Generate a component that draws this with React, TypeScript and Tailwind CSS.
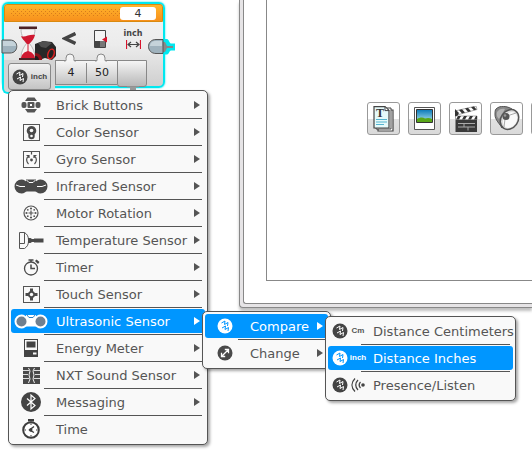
import clsx from "clsx"
import type { ReactNode } from "react"

type MenuEntry = {
  label: string
  icon: ReactNode
  active?: boolean
  leaf?: boolean
  submenu?: ReactNode
}

function CompareIcon({ inverted = false }: { inverted?: boolean }) {
  return (
    <svg width="16" height="16" viewBox="0 0 16 16" className="shrink-0" aria-hidden>
      <circle cx="8" cy="8" r="7.5" fill={inverted ? "#fff" : "#444"} />
      <g fill="none" stroke={inverted ? "#0096ff" : "#fff"}>
        <path d="M4.500 5 8 3l-.5 3.500L11 4.500 10.500 8" />
        <path d="M5 10l3.500-2-.5 3.500 3.500-2L11 13" />
      </g>
    </svg>
  )
}

function ChangeIcon() {
  return (
    <svg width="16" height="16" viewBox="0 0 16 16" aria-hidden>
      <circle cx="8" cy="8" r="7.5" fill="#4a4a4a" />
      <path d="M5 11 11 5M7.8 4.5h3.7v3.7M4.5 7.8v3.7h3.7" fill="none" stroke="#fff" strokeWidth="1.3" />
    </svg>
  )
}

function BrickIcon() {
  return (
    <svg width="20" height="16" viewBox="0 0 20 16" aria-hidden>
      <path d="M6.500 0.500h7l2.500 3.500h-12zM6.500 15.500h7l2.500-3.500h-12z" fill="#555" />
      <rect x="0.500" y="5" width="5" height="6" rx="2" fill="#555" />
      <rect x="14.500" y="5" width="5" height="6" rx="2" fill="#555" />
      <rect x="6.500" y="5" width="7" height="6" rx="1" fill="#555" />
      <rect x="9" y="7" width="2" height="2" fill="#fff" />
    </svg>
  )
}

function ColorIcon() {
  return (
    <svg width="17" height="17" viewBox="0 0 17 17" aria-hidden>
      <rect x="0.5" y="0.5" width="16" height="16" fill="none" stroke="#555" />
      <path d="M8.500 2a4.800 4.800 0 0 1 3.200 8.300V12a3.200 3.200 0 0 1-6.400 0v-1.700A4.800 4.800 0 0 1 8.500 2z" fill="#4a4a4a" />
      <circle cx="8.5" cy="6.500" r="1.800" fill="#f9f9f9" />
      <circle cx="8.5" cy="12" r="1.300" fill="#f9f9f9" />
    </svg>
  )
}

function GyroIcon() {
  return (
    <svg width="17" height="17" viewBox="0 0 17 17" aria-hidden>
      <rect x="0.5" y="0.5" width="16" height="16" fill="none" stroke="#555" />
      <path d="M5.500 13C3 10.500 3 7 5.500 5M3.500 4.500h2.500v2.500M11.500 13c2.500-2.500 2.500-6 0-8M13.500 4.500H11v2.500M8.500 1v2.500" fill="none" stroke="#4a4a4a" strokeWidth="1.200" />
      <circle cx="8.5" cy="9" r="1.400" fill="#4a4a4a" />
    </svg>
  )
}

function InfraredIcon() {
  return (
    <svg width="34" height="15" viewBox="0 0 34 15" aria-hidden>
      <path d="M7.500 0.500c3 0 4 2 5.500 2h8c1.500 0 2.500-2 5.500-2a7 7 0 0 1 0 14c-3 0-4-2-5.500-2h-8c-1.500 0-2.500 2-5.500 2a7 7 0 0 1 0-14z" fill="#4a4a4a" />
      <path d="M12 0.500h10v3H12z" fill="#4a4a4a" />
      <path d="m12.500 1 2.500 2.500h4L21.500 1M2 6l4 1.500h5M32 6l-4 1.500h-5" fill="none" stroke="#fff" />
    </svg>
  )
}

function MotorIcon() {
  return (
    <svg width="16" height="16" viewBox="0 0 16 16" aria-hidden>
      <circle cx="8" cy="8" r="7" fill="none" stroke="#555" strokeWidth="1.200" />
      <path d="M8 5.500v5M5.500 8h5" stroke="#555" strokeWidth="1.200" />
      <g fill="#555">
        <circle cx="8" cy="3.500" r="1.100" />
        <circle cx="8" cy="12.500" r="1.100" />
        <circle cx="3.500" cy="8" r="1.100" />
        <circle cx="12.500" cy="8" r="1.100" />
        <circle cx="4.800" cy="4.800" r="0.900" />
        <circle cx="11.200" cy="4.800" r="0.900" />
        <circle cx="4.800" cy="11.200" r="0.900" />
        <circle cx="11.200" cy="11.200" r="0.900" />
      </g>
    </svg>
  )
}

function TemperatureIcon() {
  return (
    <svg width="25" height="17" viewBox="0 0 25 17" aria-hidden>
      <path d="M0.500 0.500h5c3 2 4 4 4 8s-1 6-4 8h-5zM0.500 11.500h5v-11" fill="none" stroke="#555" />
      <path d="M9 6h2.500l1.500 1h2v3h-2l-1.500 1H9zM15 6.500h9.500v4H15z" fill="#4a4a4a" />
    </svg>
  )
}

function TimerIcon() {
  return (
    <svg width="17" height="17" viewBox="0 0 17 17" aria-hidden>
      <circle cx="8" cy="9.500" r="6.500" fill="none" stroke="#4a4a4a" strokeWidth="1.300" />
      <path d="M8 5.500v4h4M5.500 1h5M8 1v2" fill="none" stroke="#4a4a4a" strokeWidth="1.500" />
      <path d="m12 2 1.500-1.500L16.500 3 15 5z" fill="#4a4a4a" />
    </svg>
  )
}

function TouchIcon() {
  return (
    <svg width="17" height="17" viewBox="0 0 17 17" aria-hidden>
      <rect x="0.5" y="0.5" width="16" height="16" fill="none" stroke="#555" />
      <path d="M7 2.500h3v2.500l2 2h2.500v3H12l-2 2v2.500H7V12l-2-2H2.500V7H5l2-2z" fill="#4a4a4a" />
      <circle cx="8.5" cy="8.5" r="1.700" fill="#f9f9f9" />
    </svg>
  )
}

function UltrasonicIcon() {
  return (
    <svg width="34" height="15" viewBox="0 0 34 15" aria-hidden>
      <path d="M7.500 0.500c3 0 4 2 5.500 2h8c1.500 0 2.500-2 5.500-2a7 7 0 0 1 0 14c-3 0-4-2-5.500-2h-8c-1.500 0-2.500 2-5.500 2a7 7 0 0 1 0-14z" fill="#fff" />
      <path d="M12 1h10v3H12z" fill="#fff" />
      <circle cx="7.500" cy="7.500" r="5" fill="#708090" />
      <circle cx="26.500" cy="7.500" r="5" fill="#708090" />
      <path d="m12.500 0.500 2.500 3h4l2.500-3" fill="none" stroke="#2a7fc0" />
    </svg>
  )
}

function EnergyIcon() {
  return (
    <svg width="14" height="18" viewBox="0 0 14 18" aria-hidden>
      <path d="M0 0h14v18H0z" fill="#444" />
      <path d="M1 1h12v10H1z" fill="#f9f9f9" />
      <path d="M2.500 2.500h9v6h-9z" fill="#444" />
      <path d="M9 13.500h3.500v2H9z" fill="#f9f9f9" />
    </svg>
  )
}

function SoundIcon() {
  return (
    <svg width="17" height="17" viewBox="0 0 17 17" aria-hidden>
      <path d="M0 0h17v17H0z" fill="#4a4a4a" />
      <path d="M0 3.500h6M0 7.500h5M0 11.500h6M11 3.500h6M12 7.500h5M11 11.500h6" stroke="#ddd" />
      <path d="M5.500 1 7 4 6 8l1 4-1.500 4M11.500 1 10 4l1 4-1 4 1.500 4" fill="none" stroke="#eee" />
    </svg>
  )
}

function MessagingIcon() {
  return (
    <svg width="20" height="20" viewBox="0 0 20 20" aria-hidden>
      <circle cx="10" cy="10" r="10" fill="#444" />
      <path d="m6 6.500 8 7-4 3.500V3l4 3.500-8 7" fill="none" stroke="#fff" strokeWidth="1.200" />
    </svg>
  )
}

function TimeIcon() {
  return (
    <svg width="18" height="20" viewBox="0 0 18 20" aria-hidden>
      <path d="M6 0h6v2.500H6z" fill="#3c3c3c" />
      <circle cx="9" cy="11" r="7.800" fill="#fff" stroke="#3c3c3c" strokeWidth="2" />
      <path d="M12 7.500 7.500 11l4.500 2.500" fill="none" stroke="#3c3c3c" strokeWidth="1.400" />
      <circle cx="8.800" cy="11" r="1.700" fill="#3c3c3c" />
      <path d="M9 4.500v1.500M9 16v1.500M2.500 11H4M14 11h1.500" stroke="#3c3c3c" />
    </svg>
  )
}

function ListenIcon() {
  return (
    <svg width="14" height="16" viewBox="0 0 14 16" aria-hidden>
      <path d="M4 1.500c-4 4-4 9 0 13M7 3c-3 3-3 7 0 10M9.500 5c-1.800 2-1.800 4 0 6" fill="none" stroke="#444" strokeWidth="1.300" />
      <circle cx="12" cy="8" r="1.800" fill="#444" />
    </svg>
  )
}

function UnitIcon({ unit, inverted }: { unit: ReactNode; inverted?: boolean }) {
  return (
    <span className="flex w-full items-center justify-end gap-0.5 pr-0.5">
      <CompareIcon inverted={inverted} />
      <span className="flex w-4 justify-center font-['Liberation_Sans',Arial,sans-serif] text-[8px] leading-3 font-bold">
        {unit}
      </span>
    </span>
  )
}

function Menu({ label, items, className }: { label: string; items: MenuEntry[]; className: string }) {
  return (
    <ul
      role="menu"
      aria-label={label}
      className={clsx(
        "absolute rounded-[5px] border border-[#555] bg-[#f9f9f9] px-0.5 py-px shadow-[2px_2px_3px_rgba(0,0,0,0.35)]",
        className,
      )}
    >
      {items.map((item, idx) => (
        <li key={item.label} role="none" className="relative h-[27px] pt-px">
          <button
            type="button"
            role="menuitem"
            className={clsx(
              "flex h-6 w-full items-center rounded-[3px] pr-[5px] text-left text-[13px] leading-4 whitespace-nowrap",
              item.active ? "bg-[#0096ff] text-white" : "text-[#555]",
            )}
          >
            <span className="mr-[5px] flex w-10 shrink-0 justify-center">{item.icon}</span>
            <span className="flex-1 pt-0.5">{item.label}</span>
            {item.leaf ? null : (
              <svg width="6" height="8" viewBox="0 0 6 8" aria-hidden>
                <path d="M0 0v8l6-4z" fill="currentColor" />
              </svg>
            )}
          </button>
          {idx < items.length - 1 ? <div className="mt-px mr-[3px] ml-[33px] h-px bg-[#555]" /> : null}
          {item.submenu}
        </li>
      ))}
    </ul>
  )
}

const distanceItems: MenuEntry[] = [
  { label: "Distance Centimeters", icon: <UnitIcon unit="Cm" />, leaf: true },
  { label: "Distance Inches", icon: <UnitIcon unit="inch" inverted />, active: true, leaf: true },
  { label: "Presence/Listen", icon: <UnitIcon unit={<ListenIcon />} />, leaf: true },
]

const modeItems: MenuEntry[] = [
  {
    label: "Compare",
    icon: <CompareIcon inverted />,
    active: true,
    submenu: <Menu label="Compare" items={distanceItems} className="top-[3px] left-full z-10 -ml-[3px] w-[191px]" />,
  },
  { label: "Change", icon: <ChangeIcon /> },
]

const sensorItems: MenuEntry[] = [
  { label: "Brick Buttons", icon: <BrickIcon /> },
  { label: "Color Sensor", icon: <ColorIcon /> },
  { label: "Gyro Sensor", icon: <GyroIcon /> },
  { label: "Infrared Sensor", icon: <InfraredIcon /> },
  { label: "Motor Rotation", icon: <MotorIcon /> },
  { label: "Temperature Sensor", icon: <TemperatureIcon /> },
  { label: "Timer", icon: <TimerIcon /> },
  { label: "Touch Sensor", icon: <TouchIcon /> },
  {
    label: "Ultrasonic Sensor",
    icon: <UltrasonicIcon />,
    active: true,
    submenu: <Menu label="Ultrasonic Sensor" items={modeItems} className="top-[3px] left-full z-10 -ml-[3px] w-[129px]" />,
  },
  { label: "Energy Meter", icon: <EnergyIcon /> },
  { label: "NXT Sound Sensor", icon: <SoundIcon /> },
  { label: "Messaging", icon: <MessagingIcon /> },
  { label: "Time", icon: <TimeIcon />, leaf: true },
]

function WaitIcon() {
  return (
    <svg width="39" height="36" viewBox="0 0 39 36" aria-hidden>
      <path d="M3 3h14c0 7-3 10-5.500 14.500C15 22 17 26 17 32H3c0-6 2-10 5.500-14.500C6 13 3 10 3 3z" fill="#f6f2f2" stroke="#aaa" strokeWidth="0.800" />
      <path d="M3 10c4 2 8-2 14-1-1 4-3 6-6 9H9c-3-4-5-5-6-8z" fill="#d01830" />
      <path d="M10 18v8" stroke="#d01830" />
      <path d="M3 32c1-4 3-6 7-7 4 1 6 3 7 7" fill="#d01830" />
      <path d="M1 0.500h18v2.500H1zM1 32h18v2.500H1z" fill="#4b2226" />
      <path d="m17 18 8-3 9 1 4 5v9l-4 4-7-2-3 1-5 3-2-7z" fill="#282828" />
      <path d="m20 17 6-2 8 2-6 5-5-1z" fill="#505050" />
      <path d="M17 27c4 0 8 3 7 8h-7z" fill="#8c1018" />
      <path d="M17 30c3 0 4 2 4 5h-4z" fill="#1c1c1c" />
      <ellipse cx="33" cy="28" rx="3" ry="5" fill="#222" stroke="#d22" strokeWidth="1.500" transform="rotate(18 33 28)" />
    </svg>
  )
}

function BatteryIcon() {
  return (
    <svg width="14" height="19" viewBox="0 0 14 19" aria-hidden>
      <path d="M0.500 0.500h11v17H.5z" fill="#f4f4f4" stroke="#444" />
      <path d="M1 11h10v6H1z" fill="#444" />
      <path d="M6 11h5v6H6z" fill="#777" />
      <path d="M8 9.500 13 6.500v6z" fill="#d8142c" />
    </svg>
  )
}

function LengthIcon() {
  return (
    <svg width="15" height="9" viewBox="0 0 15 9" aria-hidden>
      <path d="M0.500 0v9M14.500 0v9" stroke="#d8142c" strokeWidth="1.200" />
      <path d="M2 4.500h11M5 2 2 4.500 5 7M10 2l3 2.500L10 7" fill="none" stroke="#444" strokeWidth="1.200" />
    </svg>
  )
}

function WaitBlock() {
  return (
    <section aria-label="Wait block" className="relative mt-0.5 ml-0.5 w-[163px]">
      <div className="rounded-[6px] border-2 border-[#00e8f0] bg-linear-to-b from-[#f4f4f4] via-[#ececec] to-[#cfcfcf] shadow-[0_0_2px_#00e8f0]">
        <header className="flex h-[18px] items-center justify-between rounded-t-[3px] border border-[#d98a10] bg-linear-to-b from-[#ffb52c] to-[#f7901c] px-1.5">
          <svg width="109" height="8" viewBox="0 0 109 8" aria-hidden>
            <defs>
              <pattern id="grip" width="4" height="4" patternUnits="userSpaceOnUse">
                <path d="M0 0h1v1H0zM2 2h1v1H2z" fill="#d87c1c" />
              </pattern>
            </defs>
            <path d="M0 0h109v8H0z" fill="url(#grip)" />
          </svg>
          <input
            aria-label="Port"
            defaultValue="4"
            className="h-[13px] w-9 rounded-[3px] bg-white text-center text-[11px] leading-3 text-[#333]"
          />
        </header>
        <div className="flex h-[38px] pt-1 pl-3.5">
          <WaitIcon />
          <div className="flex w-6 justify-center pt-1.5">
            <svg width="14" height="14" viewBox="0 0 14 14" aria-hidden>
              <path d="M13.500 1.500 3 6.500l10.500 5" fill="none" stroke="#444" strokeWidth="3.500" />
            </svg>
          </div>
          <div className="flex w-10 justify-center pt-1">
            <BatteryIcon />
          </div>
          <div className="flex w-6 flex-col items-center pt-[3px] text-[8px] leading-[9px] font-bold text-[#444]">
            inch
            <span className="pt-0.5">
              <LengthIcon />
            </span>
          </div>
        </div>
        <div className="flex h-[26px] items-start">
          {/* the mode selector hangs below the rest of the block */}
          <div className="-ml-0.5 h-[34px] w-[53px] shrink-0 rounded-bl-[6px] border-b-2 border-l-2 border-[#00e8f0] bg-[#d4d4d4] pt-[3px] pl-1">
            <button
              type="button"
              aria-label="Mode: ultrasonic distance in inches"
              className="flex h-[27px] w-[43px] items-center justify-center gap-[3px] rounded-[3px] border border-[#888] bg-linear-to-b from-[#f2f2f2] to-[#c4c4c4] font-['Liberation_Sans',Arial,sans-serif] text-[8px] font-bold text-[#444]"
            >
              <CompareIcon />
              inch
            </button>
          </div>
          <div className="flex h-[25px] w-[62px] items-center border-y border-l border-[#888] bg-linear-to-b from-[#f6f6f6] via-[#dedede] via-50% to-[#c2c2c2]">
            <input
              aria-label="Threshold"
              defaultValue="4"
              className="h-5 w-[31px] border-r border-[#888] text-center text-[11px] text-[#222]"
            />
            <input aria-label="Distance" defaultValue="50" className="h-5 w-[30px] text-center text-[11px] text-[#222]" />
          </div>
          <div className="h-[27px] w-[30px] rounded-b-[3px] border border-[#888] bg-linear-to-b from-[#f5f5f5] to-[#b8b8b8]" />
        </div>
      </div>
      {/* plugs and tabs that stick out over the block's edges */}
      <svg width="176" height="92" viewBox="0 0 176 92" className="absolute -top-0.5 -left-0.5" aria-hidden>
        <path d="M2 40h8c9 0 9 13 0 13H2z" fill="#9fb2bd" stroke="#555" />
        <path d="M3 41h7c4 0 6 2 6 5H3z" fill="#c5d3da" />
        <path d="M163 39h4c2 0 2 4 4 4.500h4v7h-4c-2 .5-2 4-4 4h-4z" fill="#00e8f0" />
        <path d="M163 42h2l2 4h6v2h-6l-2 4h-2z" fill="#888" />
        <path d="M163 39.500h-7c-10 0-10 14 0 14h7z" fill="#9fb2bd" stroke="#555" />
        <path d="M162 41h-6c-4 0-6 2-6 5h12z" fill="#c5d3da" />
        <path d="M64 61c3 0 2-1 2-3a4 4 0 0 1 8 0c0 2-1 3 2 3" fill="#f4f4f4" stroke="#888" />
        <path d="M95 61c3 0 2-1 2-3a4 4 0 0 1 8 0c0 2-1 3 2 3" fill="#f4f4f4" stroke="#888" />
        <path d="M127 86.500v1h3v3h6v-3h3v-1z" fill="#999" />
      </svg>
      <Menu label="Wait for" items={sensorItems} className="top-[88px] left-1.5 w-[200px]" />
    </section>
  )
}

function TextIcon() {
  return (
    <svg width="21" height="26" viewBox="0 0 21 26" aria-hidden>
      <path d="M5 4h15v21H5z" fill="#fff" stroke="#444" strokeWidth="1.200" />
      <path d="M3 2h15v21H3z" fill="#fff" stroke="#444" />
      <path d="M1 .6h11l4 4V22H1z" fill="#e6fafa" stroke="#444" strokeWidth="1.200" />
      <path d="M12 .6v4h4z" fill="#fff" stroke="#444" />
      <path d="M3 13.500h11M3 16h11M3 18.500h8" stroke="#54b4d0" strokeWidth="1.200" />
      <text x="3" y="11" fontFamily="Liberation Serif, serif" fontSize="12" fontWeight="bold" fill="#333">
        T
      </text>
    </svg>
  )
}

function ImageIcon() {
  return (
    <svg width="21" height="23" viewBox="0 0 21 23" aria-hidden>
      <defs>
        <linearGradient id="sky" x1="0" x2="0" y1="0" y2="1">
          <stop offset="0" stopColor="#0878b8" />
          <stop offset="1" stopColor="#b6e8ee" />
        </linearGradient>
      </defs>
      <path d="M.5.5h20v22H.5z" fill="#fff" stroke="#555" />
      <path d="M2.500 2.500h16v13h-16z" fill="url(#sky)" stroke="#333" />
      <path d="M3 12c3-2 6-2 8-.5 3-1 5-.5 7 .5v3H3z" fill="#58a618" />
    </svg>
  )
}

function VideoIcon() {
  return (
    <svg width="24" height="26" viewBox="0 0 24 26" aria-hidden>
      <path d="m1 5 21-5 1 3.500L3 9z" fill="#fff" stroke="#555" strokeWidth=".5" />
      <path d="m5 4 3 3.500 3-1L8 3.300zM11 2.500l3 3.500 3-.8-3-3.400zM17 1.200l3 3 2.500-.7L20 .4zM1 3l4 4-2 3.500H1z" fill="#333" />
      <path d="M1.500 10h21.500v3.500H1.500z" fill="#fff" stroke="#555" strokeWidth=".5" />
      <path d="M4 10h3l-2 3.500H2zM10 10h3l-2 3.500H8zM16 10h3l-2 3.500h-3zM22 10h1v3.500h-3z" fill="#333" />
      <path d="M1.500 14h21.500v12H1.500z" fill="#3a3a3a" />
      <path d="M4 17.500h17M4 21h17M10 17.500V21M14 21v3.500" stroke="#aaa" />
    </svg>
  )
}

function SpeakerIcon() {
  return (
    <svg width="26" height="25" viewBox="0 0 26 25" aria-hidden>
      <path d="M2 3C6-1 13 0 18 3L8 22C6 18 1 14 1 9c0-3 0-5 1-6z" fill="#888" stroke="#555" />
      <path d="M3 6c2-3 5-4 8-3L5 13C3 11 2 9 3 6z" fill="#b4b4b4" />
      <ellipse cx="15.500" cy="13.500" rx="8.500" ry="10.500" fill="#ddd" stroke="#555" strokeWidth="1.500" transform="rotate(35 15.500 13.500)" />
      <ellipse cx="16" cy="14" rx="6.500" ry="8.500" fill="#fafafa" transform="rotate(35 16 14)" />
      <path d="m13 10 9-3M11 13l-1 8" stroke="#aaa" />
      <circle cx="12" cy="10.500" r="3.500" fill="#555" />
      <circle cx="11" cy="9.500" r="1.300" fill="#999" />
    </svg>
  )
}

const mediaTools = [
  { label: "Text", icon: <TextIcon /> },
  { label: "Image", icon: <ImageIcon /> },
  { label: "Video", icon: <VideoIcon /> },
  { label: "Sound", icon: <SpeakerIcon /> },
  { label: "More", icon: null },
]

export default function App() {
  return (
    <div className="flex min-h-screen items-start overflow-hidden bg-white font-['DejaVu_Sans',Verdana,sans-serif]">
      <div className="w-[239px] shrink-0">
        <WaitBlock />
      </div>
      <main className="min-w-0 flex-1 rounded-bl-[4px] border-b border-l border-[#888] bg-[#e6e4e6] pb-[3px] pl-[3px] shadow-[0_3px_3px_rgba(0,0,0,0.25)]">
        <div className="rounded-bl-[3px] border-b border-l border-[#888] bg-white pb-[22px] pl-[22px]">
          <div className="flex gap-2 overflow-hidden border-b border-l border-[#888] pt-[102px] pb-[145px] pl-[100px]">
            {mediaTools.map((tool) => (
              <button
                key={tool.label}
                type="button"
                aria-label={tool.label}
                className="flex size-[33px] shrink-0 items-center justify-center rounded-[3px] border border-[#999] bg-linear-to-b from-white from-50% via-[#e2e2e2] via-50% to-[#dadada]"
              >
                {tool.icon}
              </button>
            ))}
          </div>
        </div>
      </main>
    </div>
  )
}
